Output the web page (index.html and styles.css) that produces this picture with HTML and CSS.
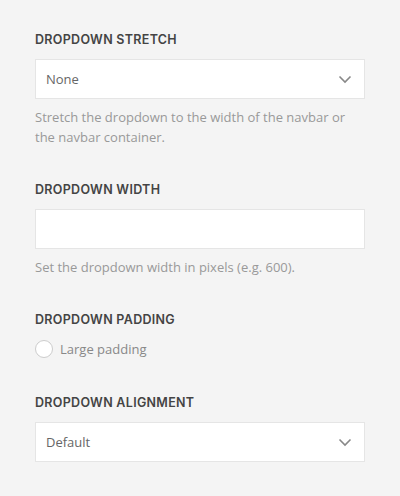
FILE: index.html
```html
<!DOCTYPE html>
<html>
<head>
<meta charset="utf-8">
<link rel="stylesheet" href="styles.css">
</head>
<body>
<div class="panel">
  <div class="field field-stretch">
    <div class="label">Dropdown Stretch</div>
    <div class="select">
      <span class="value">None</span>
      <svg class="chev" width="14" height="9" viewBox="0 0 14 9"><path d="M1.5 1.5 L7 7 L12.5 1.5" fill="none" stroke="#888" stroke-width="1.6"/></svg>
    </div>
    <div class="help">Stretch the dropdown to the width of the navbar or the navbar container.</div>
  </div>
  <div class="field field-width">
    <div class="label">Dropdown Width</div>
    <div class="input"></div>
    <div class="help">Set the dropdown width in pixels (e.g. 600).</div>
  </div>
  <div class="field field-padding">
    <div class="label">Dropdown Padding</div>
    <div class="radio-row">
      <span class="radio"></span>
      <span class="radio-text">Large padding</span>
    </div>
  </div>
  <div class="field">
    <div class="label">Dropdown Alignment</div>
    <div class="select">
      <span class="value">Default</span>
      <svg class="chev" width="14" height="9" viewBox="0 0 14 9"><path d="M1.5 1.5 L7 7 L12.5 1.5" fill="none" stroke="#888" stroke-width="1.6"/></svg>
    </div>
  </div>
</div>
</body>
</html>
```

FILE: styles.css
```css
html, body {
  margin: 0;
  padding: 0;
  background: #f4f4f4;
}
.panel {
  padding: 31px 35px 0 35px;
  width: 330px;
  font-family: "Open Sans", "Liberation Sans", sans-serif;
}
.field {
  margin-bottom: 33px;
}
.field-stretch {
  margin-bottom: 34px;
}
.field-width {
  margin-bottom: 34px;
}
.field-padding {
  margin-bottom: 35px;
}
.label {
  font-family: Inter, "Liberation Sans", sans-serif;
  font-weight: 600;
  font-size: 12.5px;
  line-height: 18px;
  text-transform: uppercase;
  color: #444;
  letter-spacing: 0.3px;
  margin-bottom: 10px;
}
.select, .input {
  box-sizing: border-box;
  height: 40px;
  background: #fff;
  border: 1px solid #e5e5e5;
  display: flex;
  align-items: center;
  justify-content: space-between;
  padding: 0 12px 0 10px;
}
.value {
  font-size: 13px;
  color: #666;
}
.chev {
  display: block;
}
.help {
  margin-top: 8px;
  font-size: 13px;
  line-height: 20px;
  color: #999;
}
.radio-row {
  display: flex;
  align-items: center;
  gap: 7px;
  height: 20px;
  margin-top: 7px;
}
.radio {
  box-sizing: border-box;
  width: 18px;
  height: 18px;
  border-radius: 50%;
  border: 1px solid #ccc;
  background: #fff;
}
.radio-text {
  font-size: 13px;
  color: #888;
}
```
